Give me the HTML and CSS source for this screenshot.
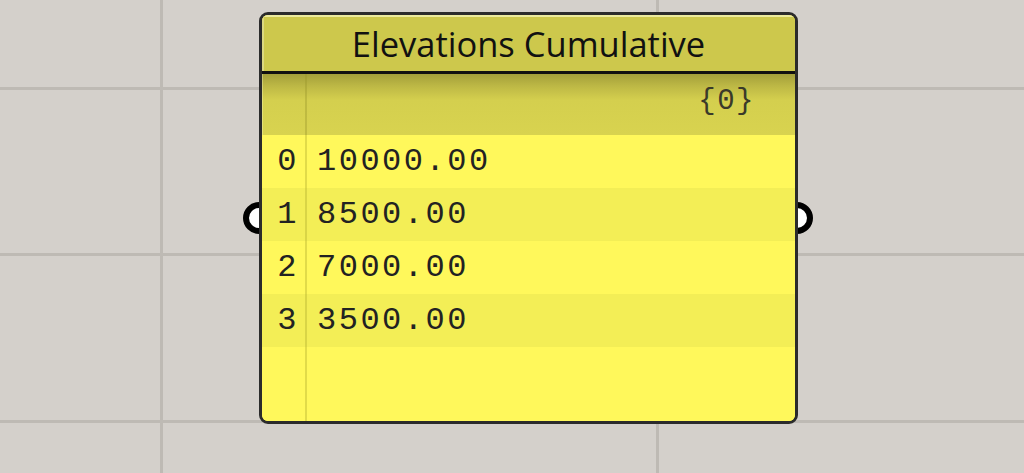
FILE: index.html
```html
<!DOCTYPE html>
<html>
<head>
<meta charset="utf-8">
<link rel="stylesheet" href="styles.css">
</head>
<body>
<div class="canvas">
  <div class="grid-v" style="left:160px"></div>
  <div class="grid-v" style="left:656px"></div>
  <div class="grid-h" style="top:87px"></div>
  <div class="grid-h" style="top:253px"></div>
  <div class="grid-h" style="top:420px"></div>

  <div class="port port-in"></div>
  <div class="port port-out"></div>

  <div class="panel">
    <div class="title">Elevations Cumulative</div>
    <div class="header">
      <div class="idx-col"></div>
      <div class="path">{0}</div>
    </div>
    <div class="body">
      <div class="row"><span class="idx">0</span><span class="val">10000.00</span></div>
      <div class="row alt"><span class="idx">1</span><span class="val">8500.00</span></div>
      <div class="row"><span class="idx">2</span><span class="val">7000.00</span></div>
      <div class="row alt"><span class="idx">3</span><span class="val">3500.00</span></div>
      <div class="row filler"><span class="idx"></span><span class="val"></span></div>
    </div>
  </div>
</div>
</body>
</html>
```
FILE: styles.css
```css
html, body {
  margin: 0;
  padding: 0;
  background: #d4d0cb;
  overflow: hidden;
}
.canvas {
  position: relative;
  width: 1024px;
  height: 473px;
}
.grid-v {
  position: absolute;
  top: 0;
  width: 3px;
  height: 473px;
  background: #bebab4;
}
.grid-h {
  position: absolute;
  left: 0;
  height: 3px;
  width: 1024px;
  background: #bebab4;
}
.port {
  position: absolute;
  top: 202px;
  width: 20px;
  height: 20px;
  border: 6px solid #000;
  border-radius: 50%;
  background: #fff;
}
.port-in { left: 243px; }
.port-out { left: 781px; }

.panel {
  position: absolute;
  left: 259px;
  top: 12px;
  width: 533px;
  height: 406px;
  border: 3px solid #2b2b2b;
  border-radius: 9px;
  overflow: hidden;
  display: flex;
  flex-direction: column;
  background: #fff85b;
  z-index: 1;
}
.title {
  flex: none;
  background: #cdc84c;
  box-shadow: inset 0 2px 0 #ecea9e, inset 2px 0 0 #dcd880;
  border-bottom: 3px solid #111;
  font-family: "Open Sans", "Noto Sans", sans-serif;
  font-size: 34.5px;
  color: #111;
  display: flex;
  align-items: center;
  justify-content: center;
  padding-top: 1px;
  box-sizing: border-box;
  height: 59px;
}
.header {
  height: 61px;
  flex: none;
  display: flex;
  background: linear-gradient(to bottom, #a39f3a 0px, #bdb845 12px, #d4cf4e 26px, #d8d34f 61px);
}
.header .idx-col {
  width: 45px;
  box-sizing: border-box;
  border-right: 2px solid rgba(150, 145, 40, 0.35);
  box-shadow: inset 1px 0 0 rgba(255, 255, 200, 0.35);
}
.path {
  flex: 1;
  text-align: right;
  padding-right: 40px;
  padding-top: 10px;
  font-family: "Liberation Mono", monospace;
  font-size: 29px;
  letter-spacing: 1.5px;
  color: #3a3a2a;
  line-height: 36px;
}
.body {
  flex: 1;
  display: flex;
  flex-direction: column;
}
.row {
  height: 53px;
  flex: none;
  display: flex;
  align-items: center;
  background: #fff85b;
  font-family: "Liberation Mono", monospace;
  font-size: 32px;
  letter-spacing: 2.5px;
  color: #222;
}
.row.alt { background: #f3ee56; }
.row.filler { flex: 1; height: auto; align-items: stretch; }
.idx {
  width: 45px;
  box-sizing: border-box;
  align-self: stretch;
  display: flex;
  align-items: center;
  justify-content: flex-end;
  padding-right: 6px;
  border-right: 2px solid rgba(170, 165, 40, 0.35);
}
.val {
  padding-left: 10px;
}
```
